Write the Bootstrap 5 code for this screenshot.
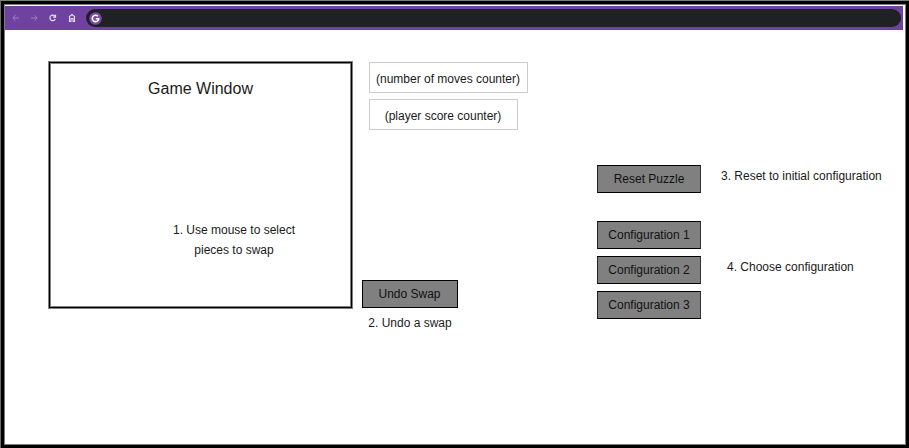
<!DOCTYPE html>
<html lang="en">
<head>
<meta charset="utf-8">
<title>Puzzle wireframe</title>
<link href="https://cdn.jsdelivr.net/npm/bootstrap@5.3.0/dist/css/bootstrap.min.css" rel="stylesheet">
<style>
  body { background: #000; font: 12px/20px "Liberation Sans", Arial, sans-serif; color: #1a1a1a; }
  .frame { width: 909px; height: 448px; padding: 3px; border-top: 1px solid #7c7f7c; border-left: 1px solid #6c6c6c; }
  .screen { background: #fff; border: 1px solid #7c7c7c; width: 902px; height: 441px; }
  .browser { background: #6f42a0; height: 24px; width: 898px; margin-top: 1px; padding: 0 2px 0 5px; }
  .browser svg { display: block; flex: none; }
  .omnibox { background: #202124; height: 18px; border-radius: 9px; padding-left: 3px; }
  .stage { padding: 32px 0 0 43px; }
  .game { width: 305px; height: 248px; margin-top: -1px; border: 1px solid #808080; box-shadow: inset 0 0 0 1px #000, inset 0 0 0 2px #808080; padding-top: 16px; }
  .game-title { font-size: 16px; line-height: 22px; }
  .hint { margin: 120px 0 0 68px; width: 234px; }
  .side { width: 166px; margin-left: 9px; }
  .counter { height: 31px; border: 1px solid #ccc; margin-left: 7px; padding: 6px 1px 0 0; }
  .moves { width: 159px; }
  .score { width: 149px; margin-top: 6px; }
  .btn.tool { --bs-btn-font-size: 12px; --bs-btn-line-height: 20px; --bs-btn-padding-y: 3px; --bs-btn-padding-x: 0; --bs-btn-border-radius: 0; --bs-btn-bg: #808080; --bs-btn-border-color: #000; --bs-btn-color: #111; width: 104px; height: 28px; }
  .actions .btn.tool { border-left-color: #222; border-right-color: #333; }
  .btn.undo { width: 96px; margin-top: 150px; padding-right: 1px; }
  .undo-note { width: 96px; margin-top: 5px; }
  .actions { margin: 103px 0 0 69px; }
  .configs { margin-top: 28px; gap: 7px; }
  .notes { margin: 104px 0 0 20px; }
  .pick-note { margin: 71px 0 0 6px; }
</style>
</head>
<body>
<div class="frame">
  <div class="screen">
    <nav class="browser d-flex align-items-center">
      <svg width="76" height="24" viewBox="0 0 76 24" fill="none" stroke="#e9def5">
        <g stroke="#a07fc6"><path d="M9 12H3M5.500 9.300L2.800 12l2.700 2.700M21 12h6M24.500 9.300l2.700 2.700-2.700 2.700"/></g>
        <path d="M45 10.200a2.800 2.800 0 1 0 .3 2.800M45.500 8.700v2.500H43" stroke-width="1.200"/>
        <path d="M59.500 15.500v-5l2.500-2 2.500 2v5h-1.500v-3h-2v3z" stroke-width="1.100"/>
      </svg>
      <div class="omnibox flex-grow-1 d-flex align-items-center">
        <svg width="13" height="13" viewBox="0 0 13 13" fill="none"><circle cx="6.500" cy="6.500" r="6.300" fill="#7748ad"/><path d="M8.900 4.300A3.200 3.200 0 1 0 9.700 6.800H6.800" stroke="#fff" stroke-width="1.600"/></svg>
      </div>
    </nav>
    <main class="stage d-flex align-items-start">
      <section class="game text-center flex-shrink-0">
        <div class="game-title">Game Window</div>
        <div class="hint">1. Use mouse to select<br>pieces to swap</div>
      </section>
      <section class="side flex-shrink-0 text-center d-flex flex-column align-items-start">
        <div class="counter moves">(number of moves counter)</div>
        <div class="counter score">(player score counter)</div>
        <button class="btn tool undo">Undo Swap</button>
        <div class="undo-note text-nowrap">2. Undo a swap</div>
      </section>
      <section class="actions flex-shrink-0 d-flex flex-column">
        <button class="btn tool">Reset Puzzle</button>
        <div class="configs d-flex flex-column">
          <button class="btn tool">Configuration 1</button>
          <button class="btn tool">Configuration 2</button>
          <button class="btn tool">Configuration 3</button>
        </div>
      </section>
      <section class="notes text-nowrap">
        <div>3. Reset to initial configuration</div>
        <div class="pick-note">4. Choose configuration</div>
      </section>
    </main>
  </div>
</div>
<script src="https://cdn.jsdelivr.net/npm/bootstrap@5.3.0/dist/js/bootstrap.bundle.min.js"></script>
</body>
</html>
